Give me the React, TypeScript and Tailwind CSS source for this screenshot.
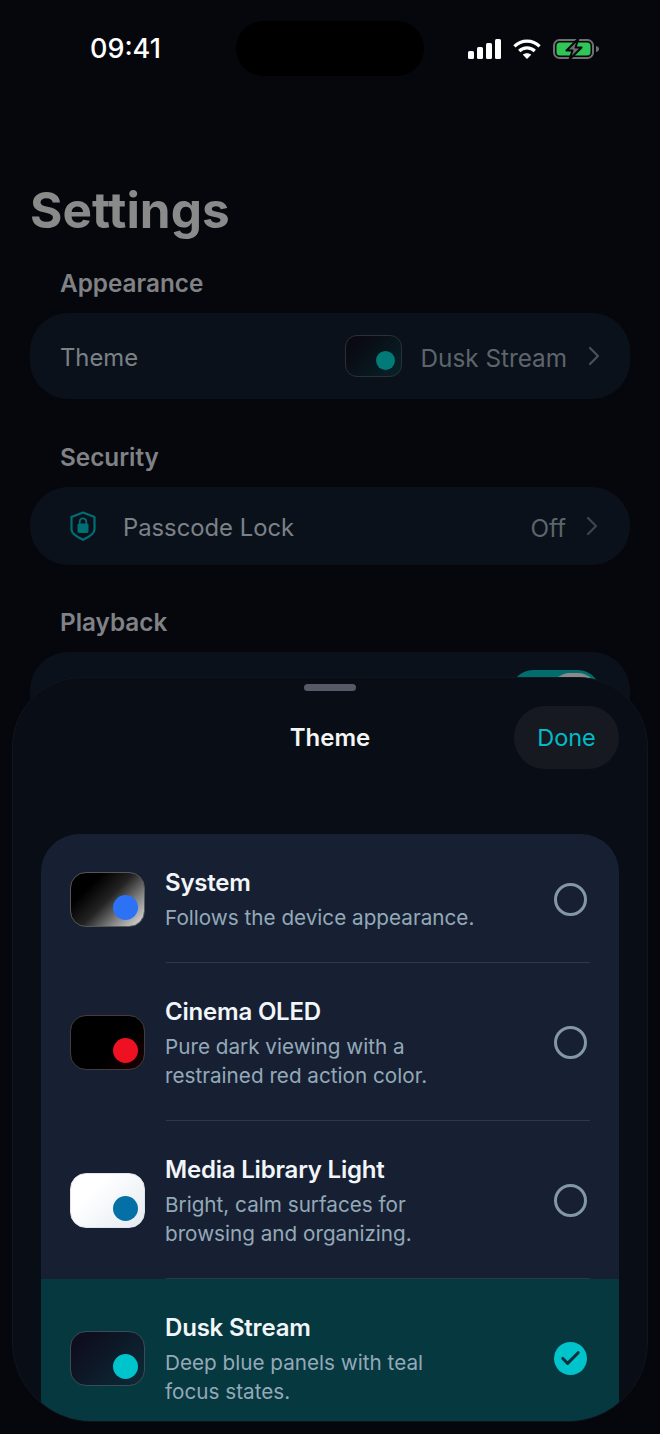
import { Check } from 'lucide-react';

const themes = [
  {
    name: 'System',
    lines: ['Follows the device appearance.'],
    swatch: 'border-[#565656] bg-[linear-gradient(135deg,#000_25%,#222_50%,#8a8a8a_75%,#e2e2e2_100%)]',
    dot: 'bg-[#2b72f5]',
  },
  {
    name: 'Cinema OLED',
    lines: ['Pure dark viewing with a', 'restrained red action color.'],
    swatch: 'border-[#423c3c] bg-[linear-gradient(135deg,#000_60%,#1c0303_100%)]',
    dot: 'bg-[#ee1122]',
  },
  {
    name: 'Media Library Light',
    lines: ['Bright, calm surfaces for', 'browsing and organizing.'],
    swatch: 'border-[#dfe5ea] bg-[linear-gradient(135deg,#ffffff_30%,#e3ebf0_100%)]',
    dot: 'bg-[#0470a6]',
  },
  {
    name: 'Dusk Stream',
    lines: ['Deep blue panels with teal', 'focus states.'],
    swatch: 'border-[#3c4c56] bg-[linear-gradient(135deg,#0e0e1e_15%,#0c2b38_100%)]',
    dot: 'bg-[#00c4cc]',
    selected: true,
  },
];

function StatusIcons() {
  return (
    <div className="flex items-center pl-[44px]">
      <svg width="33" height="20" viewBox="0 0 33 20" fill="#fff">
        <rect x="0" y="12" width="6" height="8" rx="1.5" />
        <rect x="9" y="8" width="6" height="12" rx="1.5" />
        <rect x="18" y="4" width="6" height="16" rx="1.5" />
        <rect x="27" y="0" width="6" height="20" rx="1.5" />
      </svg>
      <svg className="ml-[12px]" width="28" height="20" viewBox="0 0 28 20" fill="none" stroke="#fff" strokeWidth="3.2">
        <path d="M1.4 7.4C8.4 0.4 19.6 0.4 26.6 7.4" />
        <path d="M6.2 12C10.6 7.8 17.4 7.8 21.8 12" />
        <path d="M14 20L9.8 15.8C12.2 13.8 15.8 13.8 18.2 15.8Z" fill="#fff" stroke="none" />
      </svg>
      <svg className="ml-[12px]" width="46" height="22" viewBox="0 0 46 22" fill="none">
        <rect x="1" y="2" width="39" height="18" rx="5.5" stroke="#6f6f6f" strokeWidth="2" />
        <rect x="3.5" y="4.5" width="34" height="13" rx="3.5" fill="#2fc655" />
        <path d="M43 8C45 8.4 46 9.5 46 11C46 12.5 45 13.6 43 14Z" fill="#6f6f6f" />
        <path d="M25.5 0.5L13.5 12.5H19.5L16.5 21.5L28.5 9.5H22.5Z" fill="#6f6f6f" stroke="#05070c" strokeWidth="2" strokeLinejoin="round" />
      </svg>
    </div>
  );
}

function ShieldLock() {
  return (
    <svg width="26" height="30" viewBox="0 0 26 30" fill="none">
      <path d="M13 1.5L24.5 6V18.5C24.5 22 19 26 13 28.8C7 26 1.5 22 1.5 18.5V6Z" stroke="#006f73" strokeWidth="2.2" strokeLinejoin="round" />
      <rect x="7.5" y="12.5" width="11" height="9.5" rx="1.8" fill="#006f73" />
      <path d="M9.7 13V10.5C9.7 6.4 16.3 6.4 16.3 10.5V13" stroke="#006f73" strokeWidth="1.8" />
    </svg>
  );
}

function Chevron({ color }: { color: string }) {
  return (
    <svg width="12" height="20" viewBox="0 0 12 20" fill="none" stroke={color} strokeWidth="2.2" strokeLinecap="round" strokeLinejoin="round">
      <path d="M2 2L10 10L2 18" />
    </svg>
  );
}

function ThemeRow({ theme }: { theme: (typeof themes)[number] }) {
  return (
    <div className={`flex items-center pl-[29px] pr-[32px] pt-[32px] pb-[30px] ${theme.selected ? 'bg-[#063840]' : ''}`}>
      <div className={`relative w-[75px] h-[55px] shrink-0 rounded-[16px] border ${theme.swatch}`}>
        <div className={`absolute right-[6px] bottom-[6px] w-[25px] h-[25px] rounded-full ${theme.dot}`} />
      </div>
      <div className="flex-1 ml-[20px]">
        <p className="text-[24px] leading-[34px] font-semibold tracking-[-0.2px] text-[#f2f6f9]">{theme.name}</p>
        <div className="mt-[3px]">
          {theme.lines.map(line => (
            <p key={line} className="text-[20.7px] leading-[29px] text-[#94a9b8]">{line}</p>
          ))}
        </div>
      </div>
      {theme.selected ? (
        <div className="flex items-center justify-center w-[33px] h-[33px] rounded-full bg-[#00c4cc]">
          <Check size={23} strokeWidth={3.2} color="#12303c" />
        </div>
      ) : (
        <div className="w-[33px] h-[33px] rounded-full border-[3px] border-[#8397a6]" />
      )}
    </div>
  );
}

export default function App() {
  return (
    <div className="relative w-[660px] h-[1434px] overflow-hidden bg-[#05070c] font-['Inter',sans-serif]">
      <div className="grid grid-cols-[236px_188px_236px] items-center pt-[21px]">
        <span className="pl-[90px] pt-[1px] text-[27px] leading-[34px] font-medium text-white">09:41</span>
        <div className="h-[55px] rounded-[28px] bg-black" />
        <StatusIcons />
      </div>

      <h1 className="mt-[106px] pl-[30px] text-[49.5px] leading-[56px] font-bold text-[#8a8a8a]">Settings</h1>

      <h2 className="mt-[30px] mb-[15px] pl-[60px] text-[24.3px] leading-[30px] font-semibold text-[#808285]">Appearance</h2>
      <div className="flex items-center h-[86px] mx-[30px] pl-[30px] pr-[30px] rounded-[38px] bg-[#0b111b]">
        <span className="flex-1 pt-[4px] text-[23.8px] text-[#7b8186]">Theme</span>
        <div className="relative w-[57px] h-[42px] rounded-[12px] border border-[#2a3036] bg-[linear-gradient(135deg,#0a0a12_20%,#07232a_100%)]">
          <div className="absolute right-[6px] bottom-[6px] w-[19px] h-[19px] rounded-full bg-[#027a78]" />
        </div>
        <span className="ml-[18px] pt-[4px] text-[24.3px] text-[#5d656c]">Dusk Stream</span>
        <div className="ml-[21px]"><Chevron color="#4a5158" /></div>
      </div>

      <h2 className="mt-[43px] mb-[15px] pl-[60px] text-[24.3px] leading-[30px] font-semibold text-[#808285]">Security</h2>
      <div className="flex items-center h-[78px] mx-[30px] pl-[40px] pr-[32px] rounded-[38px] bg-[#0b111b]">
        <ShieldLock />
        <span className="flex-1 ml-[27px] pt-[4px] text-[23.8px] text-[#7b8186]">Passcode Lock</span>
        <span className="pt-[4px] text-[24.3px] text-[#5d656c]">Off</span>
        <div className="ml-[20px]"><Chevron color="#3f454c" /></div>
      </div>

      <h2 className="mt-[42px] mb-[15px] pl-[60px] text-[24.3px] leading-[30px] font-semibold text-[#808285]">Playback</h2>
      <div className="flex justify-end h-[80px] mx-[30px] pr-[30px] pt-[18px] rounded-[38px] bg-[#0b111b]">
        <div className="flex justify-end w-[89px] h-[44px] p-[3px] rounded-full bg-[#016e6d]">
          <div className="w-[46px] h-[38px] rounded-full bg-[#8a8a8a]" />
        </div>
      </div>

      {/* sheet sits over the settings list */}
      <div className="absolute left-[12px] top-[677px] w-[636px] h-[745px] overflow-hidden rounded-t-[70px] rounded-b-[80px] border border-[#10151e] bg-[#090d15]">
        <div className="mx-auto mt-[6px] w-[52px] h-[7px] rounded-full bg-[#555a66]" />
        <div className="grid grid-cols-[1fr_auto_1fr] items-center mt-[15px]">
          <div />
          <span className="pt-[1px] text-[24px] font-semibold text-[#f5f5f5]">Theme</span>
          <div className="flex justify-end pr-[28px]">
            <button className="w-[105px] h-[63px] rounded-[31px] bg-[#16191f] text-[23.5px] text-[#00bcc8]">Done</button>
          </div>
        </div>
        <div className="mt-[65px] mx-[28px] rounded-t-[38px] bg-[#172033]">
          {themes.map((theme, i) => (
            <div key={theme.name}>
              <ThemeRow theme={theme} />
              {i < themes.length - 1 && <div className="ml-[125px] mr-[29px] h-px bg-[#2a3a4a]" />}
            </div>
          ))}
        </div>
      </div>
    </div>
  );
}
